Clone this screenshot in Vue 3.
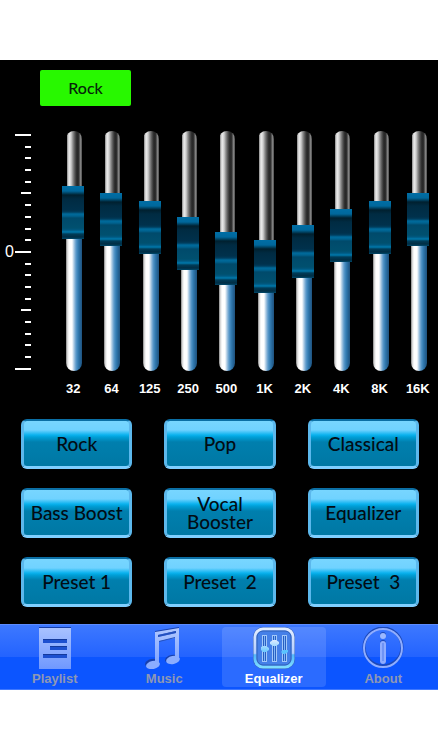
<script setup>
import { ref } from "vue";

const presets = [
	{ name: 'Rock', gains: [5, 4, 3, 1, -1, -2, 0, 2, 3, 4] },
	{ name: 'Pop', gains: [-1, 1, 3, 4, 3, 0, -1, -1, -1, -1] },
	{ name: 'Classical', gains: [4, 3, 2, 1, 0, 0, 0, -2, -3, -4] },
	{ name: 'Bass Boost', gains: [8, 7, 5, 3, 1, 0, 0, 0, 0, 0] },
	{ name: 'Vocal Booster', gains: [-3, -2, -1, 1, 4, 5, 4, 2, 0, -1] },
	{ name: 'Equalizer', gains: [0, 0, 0, 0, 0, 0, 0, 0, 0, 0] },
	{ name: 'Preset 1', gains: [2, 2, 1, 0, 0, 0, 1, 2, 2, 2] },
	{ name: 'Preset  2', gains: [0, 1, 2, 3, 3, 3, 2, 1, 0, 0] },
	{ name: 'Preset  3', gains: [6, 3, 0, -2, -3, -3, -2, 0, 3, 6] },
];
const labels = ['32', '64', '125', '250', '500', '1K', '2K', '4K', '8K', '16K'];
const tabs = ['Playlist', 'Music', 'Equalizer', 'About'];

const current = ref('Rock');
const activeTab = ref('Equalizer');
const bands = ref(labels.map((label, i) => ({ label, gain: presets[0].gains[i] })));

const applyPreset = (preset) => {
	current.value = preset.name;
	bands.value.forEach((band, i) => { band.gain = preset.gains[i]; });
};

const tickClass = (n) => {
	if (n % 10 === 0) return 'long';
	return n % 5 === 0 ? 'medium' : '';
};
// share of the track above the thumb
const above = (gain) => ((12 - gain) / 24 * 100).toFixed(1) + '%';
</script>

<template>
	<div class="app">
		<main class="screen">
			<div class="current">{{ current }}</div>

			<section class="mixer">
				<div class="scale">
					<span class="zero">0</span>
					<div class="ticks">
						<i v-for="n in 21" :key="n" class="tick" :class="tickClass(n - 1)"></i>
					</div>
				</div>
				<div class="bands">
					<label class="band" v-for="band in bands" :key="band.label">
						<input
							class="fader"
							type="range"
							min="-12"
							max="12"
							v-model.number="band.gain"
							:style="{ '--above': above(band.gain) }"
						>
						<span class="freq">{{ band.label }}</span>
					</label>
				</div>
			</section>

			<section class="presets">
				<button
					v-for="preset in presets"
					:key="preset.name"
					class="preset"
					:class="{ wrap: preset.name === 'Vocal Booster' }"
					type="button"
					@click="applyPreset(preset)"
				><span>{{ preset.name }}</span></button>
			</section>
		</main>

		<nav class="tabbar">
			<button
				v-for="tab in tabs"
				:key="tab"
				class="tab"
				:class="{ active: tab === activeTab }"
				type="button"
				@click="activeTab = tab"
			>
				<svg v-if="tab === 'Playlist'" class="icon" viewBox="0 0 42 42" aria-hidden="true">
					<defs>
						<linearGradient id="pale" x1="0" y1="0" x2="0" y2="1">
							<stop offset="0" stop-color="#a9c2ff" />
							<stop offset="1" stop-color="#6f98ff" />
						</linearGradient>
					</defs>
					<path d="M5 0H37V3H5Z" fill="#163da6" />
					<path d="M5 1H37V42H5Z" fill="url(#pale)" />
					<path d="M9 12H33V16H9ZM16 19H33V23H16ZM9 27H33V31H9Z" fill="#1c50d0" />
					<path d="M9 12H33V13H9ZM16 19H33V20H16ZM9 27H33V28H9Z" fill="#143a9c" />
				</svg>
				<svg v-else-if="tab === 'Music'" class="icon" viewBox="0 0 42 42" aria-hidden="true">
					<defs>
						<linearGradient id="note" x1="0" y1="0" x2="0" y2="1">
							<stop offset="0" stop-color="#b0c7ff" />
							<stop offset="1" stop-color="#7fa3ff" />
						</linearGradient>
					</defs>
					<g fill="#1740ae">
						<path d="M12 4L36 0V4L12 8Z" />
						<ellipse cx="9" cy="36" rx="7" ry="4" transform="rotate(-12 9 36)" />
						<ellipse cx="29" cy="32" rx="7" ry="4" transform="rotate(-12 29 32)" />
					</g>
					<path fill="url(#note)" fill-rule="evenodd" d="M12 5L36 1V33H32V11L16 14V38H12ZM15 8V10L33 6V4Z" />
					<path d="M15 8L33 4V6L15 10ZM16 14L32 10V11L16 15Z" fill="#2450bd" />
					<ellipse cx="10" cy="38" rx="7" ry="4" transform="rotate(-12 10 38)" fill="#8badff" />
					<ellipse cx="30" cy="33" rx="7" ry="4" transform="rotate(-12 30 33)" fill="#8badff" />
				</svg>
				<svg v-else-if="tab === 'Equalizer'" class="icon" viewBox="0 0 42 42" aria-hidden="true">
					<defs>
						<linearGradient id="frame" x1="0" y1="0" x2="0" y2="1">
							<stop offset="0" stop-color="#e2edff" />
							<stop offset=".64" stop-color="#b4ceff" />
							<stop offset=".68" stop-color="#53b6fb" />
							<stop offset="1" stop-color="#7ddcff" />
						</linearGradient>
						<linearGradient id="knob" x1="0" y1="0" x2="0" y2="1">
							<stop offset="0" stop-color="#dceaff" />
							<stop offset="1" stop-color="#69c9ff" />
						</linearGradient>
					</defs>
					<rect x="0" y="0" width="42" height="42" rx="10" fill="#3a62b4" />
					<rect x="2" y="2" width="38" height="38" rx="8" fill="#4580e8" stroke="url(#frame)" stroke-width="3" />
					<rect x="4" y="4" width="34" height="34" rx="6" fill="none" stroke="#3060b8" />
					<g fill="#2a5fc0" stroke="#a3c8f8">
						<rect x="9.500" y="8.500" width="4" height="26" />
						<rect x="19.500" y="8.500" width="4" height="26" />
						<rect x="29.500" y="8.500" width="4" height="26" />
					</g>
					<path d="M11 9H12V34H11ZM21 9H22V34H21ZM31 9H32V34H31Z" fill="#7fb7fb" />
					<path d="M8 20L10 19H13L16 21V23L13 25H10L8 23ZM17 15L20 13H23L26 15V17L23 19H20L17 17Z" fill="url(#knob)" />
					<path d="M28 25L30 23H35V25L32 27H30Z" fill="#5bc4ff" />
				</svg>
				<svg v-else class="icon" viewBox="0 0 42 42" aria-hidden="true">
					<circle cx="21" cy="20" r="19" fill="none" stroke="#1c48b8" stroke-width="3" />
					<circle cx="21" cy="21" r="19" fill="none" stroke="#8fadff" stroke-width="2" />
					<circle cx="21" cy="8" r="3" fill="#1c48b8" />
					<circle cx="21" cy="9" r="3" fill="#9cb8ff" />
					<rect x="18" y="13" width="6" height="24" rx="3" fill="#1c48b8" />
					<rect x="18" y="14" width="6" height="23" rx="3" fill="#8fadff" />
					<path d="M20 16H22V34H20Z" fill="#6f94f5" />
				</svg>
				<span>{{ tab }}</span>
			</button>
		</nav>
	</div>
</template>

<style>
body {
	margin: 0;
	background: #fff;
}
</style>

<style scoped>
.app {
	padding: 60px 0;
	font-family: "Liberation Sans", Arial, sans-serif;
}
.screen {
	padding: 10px 0 17px;
	background: #000;
}
.current {
	width: 91px;
	margin-left: 40px;
	border-radius: 2px;
	background: #28f800;
	color: #06240a;
	font: 500 16px/36px Lato, sans-serif;
	text-align: center;
	white-space: pre;
}
.mixer {
	display: flex;
	margin-top: 25px;
	padding-right: 1px;
}
.scale {
	display: flex;
	align-items: center;
	justify-content: flex-end;
	width: 31px;
	height: 236px;
	margin-right: 23px;
	padding-top: 3px;
}
.zero {
	width: 10px;
	color: #fff;
	font: 16px/20px "Liberation Sans Narrow", "Liberation Sans", sans-serif;
}
.ticks {
	display: flex;
	flex-direction: column;
	align-items: flex-end;
	justify-content: space-between;
	width: 16px;
	height: 100%;
}
.tick {
	width: 6px;
	height: 2px;
	background: #fff;
}
.tick.medium {
	width: 10px;
}
.tick.long {
	width: 16px;
}
.bands {
	display: flex;
	flex: 1;
}
.band {
	display: flex;
	flex: 1 1 0;
	flex-direction: column;
	align-items: center;
	gap: 10px;
	min-width: 0;
}
.fader {
	box-sizing: border-box;
	width: 22px;
	height: 240px;
	margin: 0;
	padding: 0 2px 0 4px;
	appearance: none;
	background: none;
	writing-mode: vertical-lr;
	direction: rtl;
	cursor: pointer;
}
.fader::-webkit-slider-runnable-track {
	width: 16px;
	height: 240px;
	border-radius: 8px;
	background:
		linear-gradient(90deg, #000 0 1px, #888 1px, #eee 3px, #d0d0d0 5px, #8a8a8a 7px, #505050 9px, #262626 11px, #303030 13px, #777 14px, #8a8a8a 15px, #333 16px) top / 100% var(--above) no-repeat,
		linear-gradient(90deg, #777 0, #ccc 1px, #fff 3px, #fff 6px, #a9c8e2 8px, #5c9acb 10px, #357eb4 12px, #266699 14px, #1f527d 16px);
}
.fader::-webkit-slider-thumb {
	width: 22px;
	height: 53px;
	margin-left: -4px;
	appearance: none;
	background: linear-gradient(#006ea5 0, #00679b 5px, #004566 7px, #00202f 9px, #002b42 13px, #00314c 24px, #003d5d 26px, #006b9c 28px, #00628f 30px, #004a6b 32px, #00506f 42px, #005880 44px, #0079ac 46px, #003c58 48px, #002d44 51px, #004a6c 53px);
}
.freq {
	color: #fff;
	font-size: 13px;
	font-weight: bold;
	line-height: 16px;
}
.presets {
	display: grid;
	grid-template-columns: repeat(3, 1fr);
	gap: 19px 32px;
	margin-top: 22px;
	padding: 0 19px 0 21px;
}
.preset {
	height: 50px;
	padding: 0;
	border: 3px solid;
	border-color: #0b6fa5 #5cb8ec #7fcfff;
	border-top-width: 2px;
	border-radius: 6px;
	background: linear-gradient(#78d6ff 0, #70d2ff 9px, #0ab2ee 14px, #00a0d8 16px, #007fae 21px, #0078a4 100%);
	color: #020c14;
	font: 500 19px/18px Lato, sans-serif;
	white-space: pre;
	cursor: pointer;
}
.preset.wrap {
	white-space: normal;
}
.tabbar {
	display: flex;
	box-sizing: border-box;
	height: 66px;
	border-top: 1px solid #5c8cff;
	border-bottom: 1px solid #3f78ff;
	background: linear-gradient(#3d78ff, #2363ff 50%, #0c55ff 50%, #0c55ff);
}
.tab {
	display: flex;
	flex: 1 1 0;
	flex-direction: column;
	align-items: center;
	gap: 2px;
	min-width: 0;
	margin: 2px 3px;
	padding: 0;
	border: 0;
	border-radius: 4px;
	background: none;
	color: #8e98b4;
	font: bold 13px/16px "Liberation Sans", Arial, sans-serif;
	cursor: pointer;
}
.tab.active {
	background: rgba(255, 255, 255, .13);
	color: #fff;
}
.icon {
	width: 42px;
	height: 42px;
}
</style>
